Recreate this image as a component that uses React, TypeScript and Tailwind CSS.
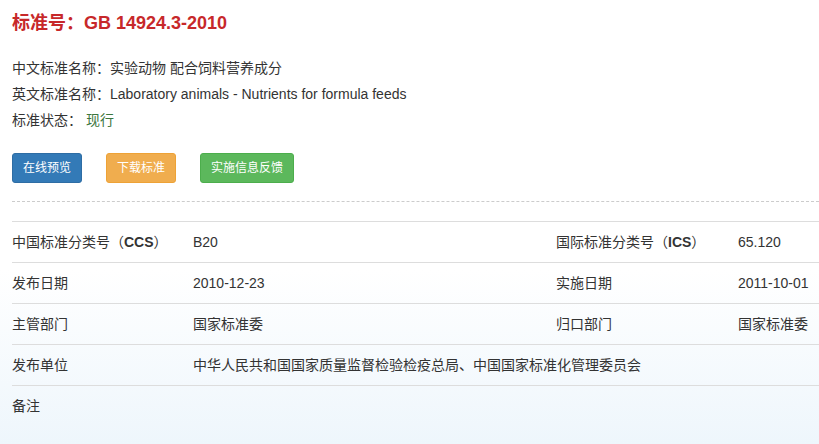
const rows: { label: React.ReactNode; value: string; label2?: React.ReactNode; value2?: string }[] = [
  {
    label: (
      <>
        中国标准分类号（<b>CCS</b>）
      </>
    ),
    value: "B20",
    label2: (
      <>
        国际标准分类号（<b>ICS</b>）
      </>
    ),
    value2: "65.120",
  },
  { label: "发布日期", value: "2010-12-23", label2: "实施日期", value2: "2011-10-01" },
  { label: "主管部门", value: "国家标准委", label2: "归口部门", value2: "国家标准委" },
  { label: "发布单位", value: "中华人民共和国国家质量监督检验检疫总局、中国国家标准化管理委员会" },
  { label: "备注", value: "" },
];

export default function App() {
  return (
    <div
      className="min-h-[444px] w-full overflow-hidden bg-[linear-gradient(to_bottom,#ffffff_0px,#ffffff_270px,#eef6fc_444px)] pl-3 pt-[11px] text-[14px] text-[#333]"
      style={{ fontFamily: '"Liberation Sans", "Noto Sans CJK SC", sans-serif' }}
    >
      {/* Title */}
      <h1 className="text-[18px] font-bold leading-6 text-[#c7282a]">标准号：GB 14924.3-2010</h1>

      {/* Basic info */}
      <div className="mt-5 leading-[26px]">
        <p>中文标准名称：实验动物 配合饲料营养成分</p>
        <p>英文标准名称：Laboratory animals - Nutrients for formula feeds</p>
        <p>
          标准状态：<span className="ml-1 text-[#3c763d]">现行</span>
        </p>
      </div>

      {/* Actions */}
      <div className="mt-5 flex gap-6">
        <button className="h-[30px] rounded-[3px] border border-[#2e6da4] bg-[#337ab7] px-[10px] text-[12px] text-white">
          在线预览
        </button>
        <button className="h-[30px] rounded-[3px] border border-[#eea236] bg-[#f0ad4e] px-[10px] text-[12px] text-white">
          下载标准
        </button>
        <button className="h-[30px] rounded-[3px] border border-[#4cae4c] bg-[#5cb85c] px-[10px] text-[12px] text-white">
          实施信息反馈
        </button>
      </div>

      <div className="mt-[18px] border-t border-dashed border-[#ccc]" />

      {/* Detail table */}
      <div className="mt-[19px] border-t border-[#ddd]">
        {rows.map((r, i) => (
          <div
            key={i}
            className="grid h-[41px] grid-cols-[181px_363px_182px_1fr] items-center border-b border-[#ddd] last:border-b-0"
          >
            <div>{r.label}</div>
            <div className={r.label2 ? "" : "col-span-3"}>{r.value}</div>
            {r.label2 && <div>{r.label2}</div>}
            {r.label2 && <div className="whitespace-nowrap">{r.value2}</div>}
          </div>
        ))}
      </div>
    </div>
  );
}
